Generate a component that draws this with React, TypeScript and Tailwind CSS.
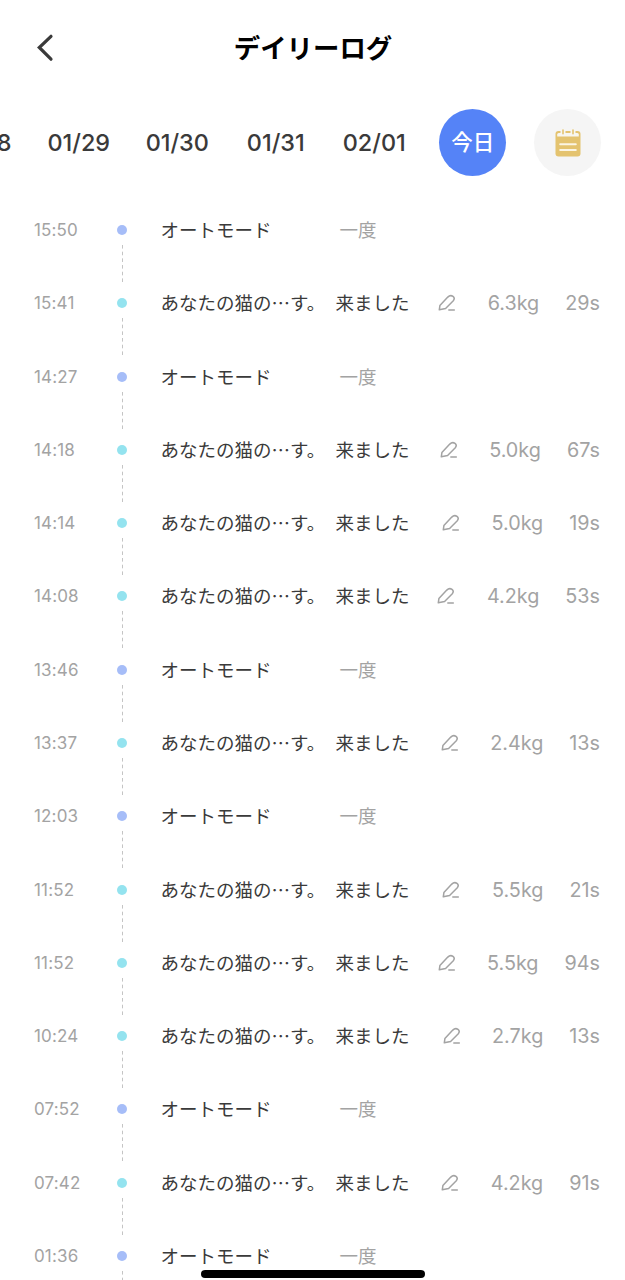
type LogEntry = {
  time: string,
  weight?: string,
  duration?: string,
}

const dates = ["01/28", "01/29", "01/30", "01/31", "02/01"];

// entries without weight are automatic cleanings
const logs: LogEntry[] = [
  { time: "15:50" },
  { time: "15:41", weight: "6.3kg", duration: "29s" },
  { time: "14:27" },
  { time: "14:18", weight: "5.0kg", duration: "67s" },
  { time: "14:14", weight: "5.0kg", duration: "19s" },
  { time: "14:08", weight: "4.2kg", duration: "53s" },
  { time: "13:46" },
  { time: "13:37", weight: "2.4kg", duration: "13s" },
  { time: "12:03" },
  { time: "11:52", weight: "5.5kg", duration: "21s" },
  { time: "11:52", weight: "5.5kg", duration: "94s" },
  { time: "10:24", weight: "2.7kg", duration: "13s" },
  { time: "07:52" },
  { time: "07:42", weight: "4.2kg", duration: "91s" },
  { time: "01:36" },
];

const BackIcon = () => (
  <svg width="18" height="28" viewBox="0 0 18 28" fill="none" stroke="#3a3a3a" strokeWidth="3.2" strokeLinecap="round" strokeLinejoin="miter">
    <path d="M15 2.300 3.300 13.500 15 25.200" />
  </svg>
)

const CalendarIcon = () => (
  <svg width="26" height="28" viewBox="0 0 26 28">
    <rect x="0.5" y="2" width="25" height="25.5" rx="3" fill="#e4c36f" />
    <path d="M2.200 7.500V5.500Q2.200 4 3.700 4H22.300Q23.800 4 23.800 5.500V7.500Z" fill="#f8f6ef" />
    <path d="M8 0V5M18 0V5" stroke="#f7f6f2" strokeWidth="5" />
    <path d="M8 1V4.800M18 1V4.800" stroke="#e4c36f" strokeWidth="1.600" strokeLinecap="round" />
    <path d="M5.200 15.200H20.800M5.200 20.900H20.800" stroke="#fbf5e4" strokeWidth="2" strokeLinecap="round" />
  </svg>
)

const EditIcon = () => (
  <svg width="18" height="18" viewBox="0 0 18 18" fill="none" stroke="#a3a3a3" strokeWidth="1.500" strokeLinecap="round" strokeLinejoin="round">
    <path d="M1.300 15.800 1.900 11.600 9.800 3.100Q12.300 0.600 15 2.400Q17.300 4.200 15.300 6.800L7.600 14.500Z" />
    <path d="M10.800 16H16.300" />
  </svg>
)

const LogRow = ({ log }: { log: LogEntry }) => {
  return (
    <li className="flex h-[73.29px] shrink-0 items-start">
      <span className="w-[83px] text-[17px] leading-[74px] tracking-[0.15px] text-[#a3a3a3]">{log.time}</span>
      <div className="flex h-full w-[10px] flex-col items-center pt-[32px]">
        <span className={`size-[10px] shrink-0 rounded-full ${log.weight ? "bg-[#94e3ef]" : "bg-[#a6bdf8]"}`} />
        <svg className="mt-[10px] shrink-0" width="2" height="37">
          <path d="M1.500 0V37" stroke="#c4c4c4" strokeWidth="1" strokeDasharray="3.600 3.080" />
        </svg>
      </div>
      {log.weight ?
        <div className="ml-[33.5px] flex flex-1 items-center leading-[74px]">
          <span className="w-[175px] text-[18.5px] whitespace-nowrap text-[#3a3a3a]">あなたの猫の⋯す。</span>
          <span className="text-[18.5px] whitespace-nowrap text-[#3a3a3a]">来ました</span>
          <div className="ml-auto flex items-center text-[19.8px] text-[#a3a3a3]">
            <EditIcon />
            <span className="ml-[31.5px]">{log.weight}</span>
            <span className="ml-[26px]">{log.duration}</span>
          </div>
        </div>
        :
        <div className="ml-[33.5px] flex flex-1 items-center text-[18.5px] leading-[74px]">
          <span className="w-[179px] text-[#3a3a3a]">オートモード</span>
          <span className="text-[#a3a3a3]">一度</span>
        </div>
      }
    </li>
  )
}

const App = () => {
  return (
    <div className="relative flex h-[1280px] w-[625px] flex-col overflow-hidden bg-white font-['Inter','Noto_Sans_CJK_JP',sans-serif]">
      <header className="grid h-24 shrink-0 grid-cols-[1fr_auto_1fr] items-center px-[36px]">
        <button type="button" aria-label="戻る" className="justify-self-start"><BackIcon /></button>
        <h1 className="pt-px pl-px text-[26.4px] font-bold text-black">デイリーログ</h1>
      </header>

      <nav className="flex h-[93px] shrink-0 items-center">
        <div className="flex w-[522px] shrink-0 justify-end overflow-hidden">
          {dates.map((date) => (
            <button key={date} type="button" className="w-[98.5px] shrink-0 text-center text-[23.4px] font-medium text-[#3a3a3a]">{date}</button>
          ))}
          <div className="flex w-[98.5px] shrink-0 justify-center">
            <button type="button" className="size-[67px] rounded-full bg-[#5583f7] text-[21.5px] font-medium text-white">今日</button>
          </div>
        </div>
        <button type="button" aria-label="カレンダー" className="ml-[12px] flex size-[67px] items-center justify-center rounded-full bg-[#f5f5f5]">
          <CalendarIcon />
        </button>
      </nav>

      <ul className="flex flex-col pt-[4px] pr-[25px] pl-[34px]">
        {logs.map((log, i) => <LogRow key={i} log={log} />)}
      </ul>

      {/* home indicator */}
      <div className="absolute bottom-[2px] left-[201px] h-[8px] w-[224px] rounded-full bg-black" />
    </div>
  )
}

export default App
